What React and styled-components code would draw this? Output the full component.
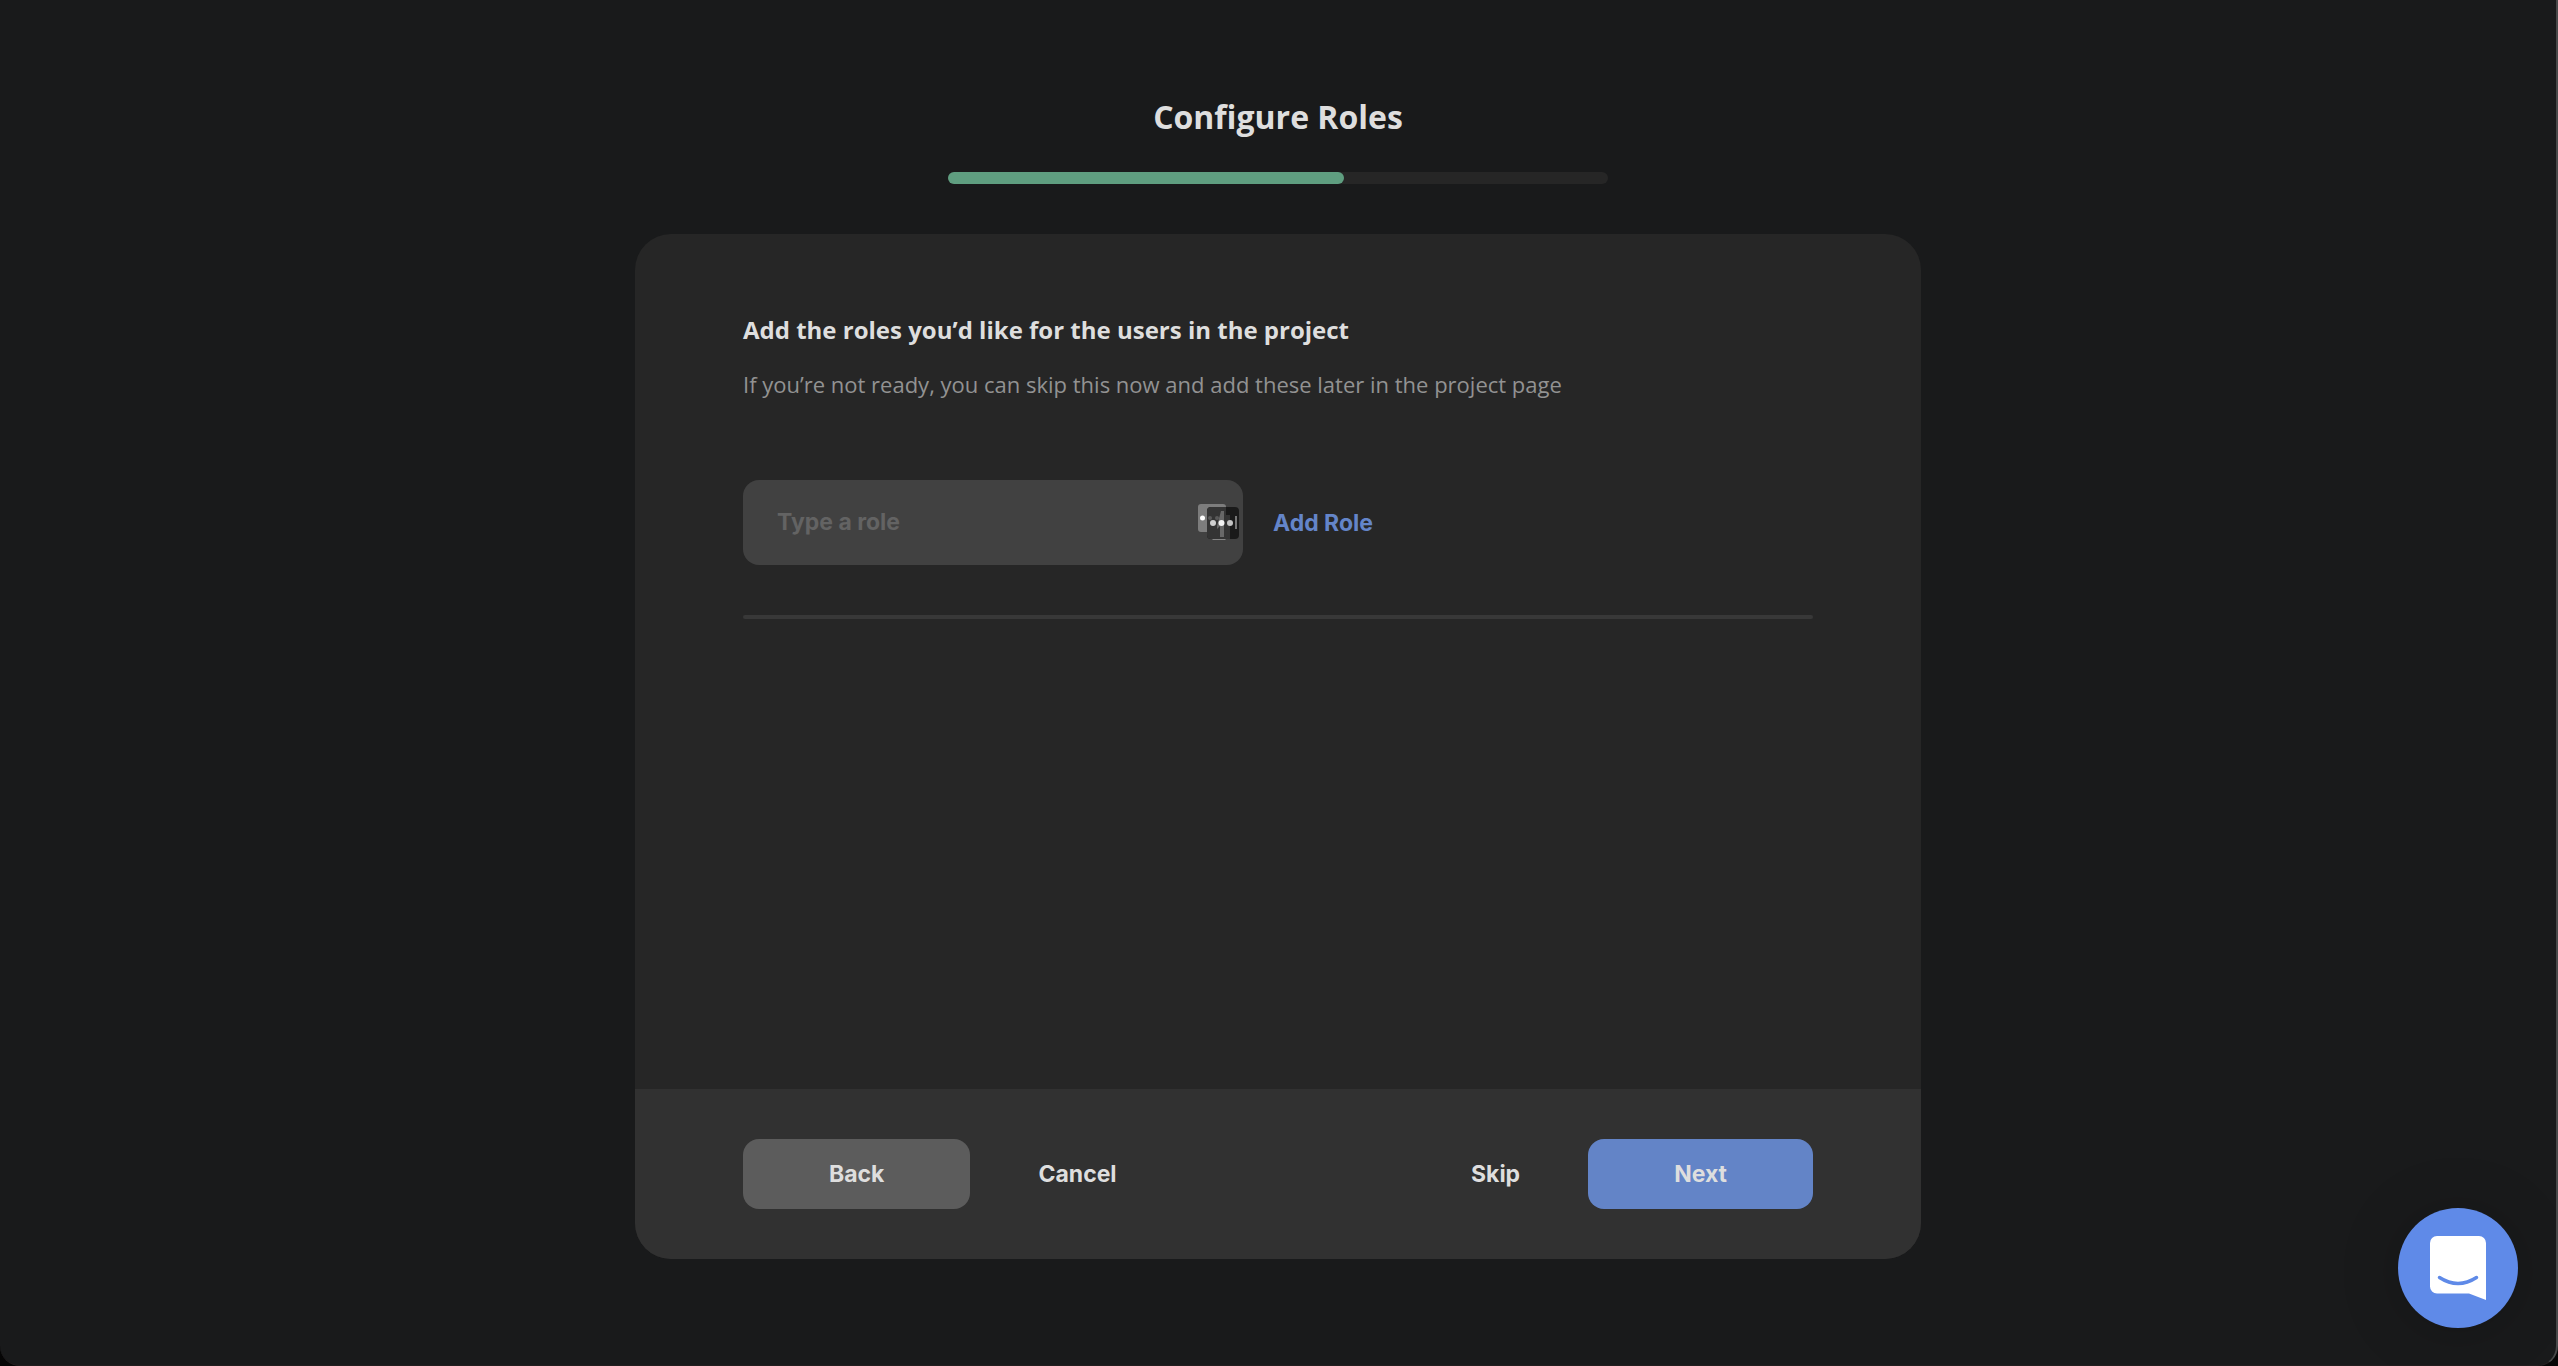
import React, { useState } from "react";
import styled, { createGlobalStyle } from "styled-components";

const GlobalStyle = createGlobalStyle`
  *, *::before, *::after { box-sizing: border-box; }
  html, body { margin: 0; background: #060606; }
  body {
    color: #dedede;
    font-family: Inter, "Liberation Sans", sans-serif;
    -webkit-font-smoothing: antialiased;
  }
  button, input { font: inherit; color: inherit; }
`;

const Page = styled.div`
  display: flex;
  flex-direction: column;
  align-items: center;
  min-height: 100vh;
  padding: 94px 0 106px;
  background: #191a1b;
  border: 0 solid #48494a;
  border-width: 0 2px 1px 0;
  border-bottom-color: #231e1f;
  border-radius: 0 0 20px 20px;
`;

const Title = styled.h1`
  margin: 0;
  font: 700 32px/46px "Open Sans", sans-serif;
`;

const Progress = styled.div`
  width: 660px;
  max-width: 100%;
  height: 12px;
  margin: 32px 0 50px;
  border-radius: 6px;
  background: #262626;
`;

const ProgressFill = styled.div`
  height: 100%;
  border-radius: 6px;
  background: #5f9e80;
`;

const Card = styled.form`
  display: flex;
  flex: 1;
  flex-direction: column;
  width: 1286px;
  max-width: 100%;
  overflow: hidden;
  border-radius: 36px;
  background: #262626;
`;

const CardBody = styled.div`
  flex: 1;
  padding: 78px 108px;
`;

const Heading = styled.h2`
  margin: 0 0 19px;
  font: 700 24px/36px "Open Sans", sans-serif;
`;

const Hint = styled.p`
  margin: 0 0 79px;
  color: #929292;
  font: 400 22px/34px "Open Sans", sans-serif;
`;

const RoleRow = styled.div`
  display: flex;
  align-items: center;
  gap: 30px;
  padding-bottom: 50px;
`;

const Field = styled.label`
  position: relative;
  display: block;
  width: 500px;
`;

const RoleInput = styled.input`
  display: block;
  width: 100%;
  height: 85px;
  padding: 0 64px 2px 34px;
  border: 0;
  border-radius: 16px;
  outline: none;
  background: #414141;
  font-size: 23px;
  font-weight: 700;
  &::placeholder { color: #636363; opacity: 1; }
`;

const FieldIcon = styled.svg`
  position: absolute;
  top: 22px;
  right: 2px;
  width: 44px;
  height: 40px;
`;

const TextButton = styled.button`
  padding: 0;
  border: 0;
  background: none;
  color: ${(p) => (p.$accent ? "#6485c9" : "#dedede")};
  font-size: 23px;
  font-weight: 700;
  line-height: 28px;
  cursor: pointer;
`;

const Divider = styled.hr`
  height: 4px;
  margin: 0;
  border: 0;
  border-radius: 2px;
  background: #383838;
`;

const Footer = styled.footer`
  display: flex;
  align-items: center;
  gap: 68px;
  padding: 50px 108px;
  background: #313131;
`;

const Spacer = styled.div`
  flex: 1;
`;

const SolidButton = styled.button`
  height: 70px;
  padding: 0 86px;
  border: 0;
  border-radius: 16px;
  background: ${(p) => (p.$primary ? "#6384c7" : "#5c5c5c")};
  font-size: 23px;
  font-weight: 700;
  cursor: pointer;
`;

const ChatButton = styled.button`
  position: fixed;
  right: 40px;
  bottom: 38px;
  width: 120px;
  height: 120px;
  padding: 0;
  border: 0;
  border-radius: 50%;
  background: #5f8ae8;
  box-shadow: 0 2px 12px rgba(0, 0, 0, 0.06), 0 4px 64px rgba(0, 0, 0, 0.16);
  cursor: pointer;
`;

const ChatIcon = styled.svg`
  display: block;
  width: 56px;
  height: 64px;
  margin: 0 auto;
`;

function PasswordIcon() {
  return (
    <FieldIcon viewBox="0 0 44 40" aria-hidden="true">
      <rect x="1" y="2" width="28" height="28" rx="3" fill="#7d7d7d" />
      <path d="M13 35h13l3 3H16z" fill="#858585" />
      <rect x="10" y="5" width="32" height="32" rx="4" fill="#1a1a1a" />
      <path d="M14 5h15v8h4v24H14a4 4 0 0 1-4-4V9a4 4 0 0 1 4-4z" fill="#343434" />
      <path d="M24 9h3v26h-4V24l-3 3v-3z" fill="#686868" />
      <circle cx="13" cy="16" r="2" fill="#5a5a5a" />
      <circle cx="20" cy="16" r="2" fill="#5a5a5a" />
      <circle cx="5.5" cy="16" r="2.5" fill="#fff" />
      <circle cx="16" cy="21" r="3" fill="#d0d0d0" />
      <circle cx="24.5" cy="21" r="3" fill="#f4f4f4" />
      <circle cx="33" cy="21" r="3" fill="#c4c4c4" />
      <path d="M38 14h2v13h-2z" fill="#777" />
    </FieldIcon>
  );
}

export default function App() {
  const [role, setRole] = useState("");
  const progress = 60;
  return (
    <>
      <GlobalStyle />
      <Page>
        <Title>Configure Roles</Title>
        <Progress role="progressbar" aria-label="Setup progress" aria-valuenow={progress}>
          <ProgressFill style={{ width: `${progress}%` }} />
        </Progress>
        <Card onSubmit={(e) => e.preventDefault()}>
          <CardBody>
            <Heading>Add the roles you’d like for the users in the project</Heading>
            <Hint>If you’re not ready, you can skip this now and add these later in the project page</Hint>
            <RoleRow>
              <Field>
                <RoleInput
                  aria-label="Role"
                  placeholder="Type a role"
                  value={role}
                  onChange={(e) => setRole(e.target.value)}
                />
                <PasswordIcon />
              </Field>
              <TextButton type="button" $accent>Add Role</TextButton>
            </RoleRow>
            <Divider />
          </CardBody>
          <Footer>
            <SolidButton type="button">Back</SolidButton>
            <TextButton type="button">Cancel</TextButton>
            <Spacer />
            <TextButton type="button">Skip</TextButton>
            <SolidButton type="submit" $primary>Next</SolidButton>
          </Footer>
        </Card>
      </Page>
      <ChatButton type="button" aria-label="Open chat">
        <ChatIcon viewBox="0 0 56 64" aria-hidden="true">
          <path d="M7 0H49a7 7 0 0 1 7 7V64L39 57.500H7a7 7 0 0 1-7-7V7a7 7 0 0 1 7-7Z" fill="#fff" />
          <path d="M9.500 41.500Q28 53.500 46.500 41.500" fill="none" stroke="#5f8ae8" strokeWidth="3.500" strokeLinecap="round" />
        </ChatIcon>
      </ChatButton>
    </>
  );
}
